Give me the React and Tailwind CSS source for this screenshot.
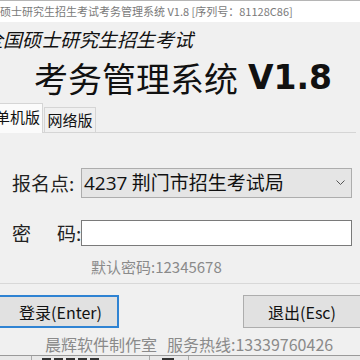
const CJK = { fontFamily: '"Noto Sans CJK SC", "Noto Sans", sans-serif' }

export default function App() {
  return (
    <div className="w-[360px] h-[360px] overflow-hidden bg-[#f0f0f0] flex flex-col" style={CJK}>
      {/* window title */}
      <div className="h-[22px] shrink-0 bg-white border-t border-[#b5b5b5] text-[11px] leading-[20px] text-[#7a7a7a] whitespace-nowrap">
        硕士研究生招生考试考务管理系统 V1.8 [序列号：81128C86]
      </div>

      {/* header */}
      <div className="mt-[4px] ml-[-16px] h-[26px] text-[19px] leading-[26px] italic text-[#111] whitespace-nowrap">
        全国硕士研究生招生考试
      </div>
      <div className="mt-[6px] pl-[34px] h-[40px] flex items-center whitespace-nowrap text-[#111]">
        <span className="text-[34px] leading-[40px]">考务管理系统</span>
        <span className="ml-[10px] text-[33px] leading-[40px] font-bold" style={{ fontFamily: '"DejaVu Sans", sans-serif' }}>V1.8</span>
      </div>

      {/* tabs */}
      <div className="mt-[5px] flex items-end h-[30px] border-b border-[#d5d5d5] mr-[4px]">
        <div className="ml-[-1px] w-[44px] h-[30px] bg-[#fbfbfb] border-t border-r border-[#d5d5d5] text-[15px] leading-[26px] text-[#111] mb-[-1px] overflow-hidden whitespace-nowrap">
          <span className="ml-[-4px]">单机版</span>
        </div>
        <div className="ml-[1px] w-[52px] h-[25px] bg-[#f0f0f0] border border-b-0 border-[#d5d5d5] text-[15px] leading-[23px] text-[#111] text-center">
          网络版
        </div>
      </div>

      {/* form */}
      <div className="flex flex-col h-[151px] border-b border-[#d8d8d8]">
        <div className="mt-[35px] flex items-center h-[30px]">
          <div className="w-[81px] pl-[12px] text-[19px] text-[#222] whitespace-nowrap">报名点:</div>
          <div className="w-[271px] h-[30px] bg-[#e5e5e5] border border-[#adadad] flex items-center pl-[2px] pr-[6px]">
            <span className="flex-1 text-[19px] text-[#111] whitespace-nowrap">
              <span style={{ fontFamily: '"Open Sans", sans-serif' }}>4237</span> 荆门市招生考试局
            </span>
            <svg width="9" height="6" viewBox="0 0 9 6" fill="none" stroke="#555" strokeWidth="1">
              <path d="M0.5 0.5 L4.5 4.5 L8.5 0.5" />
            </svg>
          </div>
        </div>
        <div className="mt-[22px] flex items-center h-[26px]">
          <div className="w-[81px] pl-[12px] text-[19px] text-[#222] whitespace-nowrap flex">
            <span>密</span>
            <span className="ml-[26px]">码:</span>
          </div>
          <div className="w-[271px] h-[26px] bg-white border border-[#7a7a7a]" />
        </div>
        <div className="mt-[12px] pl-[91px] text-[15px] leading-[18px] text-[#8a8a8a] whitespace-nowrap">
          默认密码:12345678
        </div>
      </div>

      {/* buttons */}
      <div className="mt-[11px] flex justify-between h-[33px]">
        <button className="ml-[-2px] w-[121px] h-[33px] bg-[#e1e1e1] border-2 border-[#2f83d3] text-[16px] text-[#111] pl-[4px]">
          登录(Enter)
        </button>
        <button className="w-[118px] h-[33px] bg-[#e1e1e1] border border-[#adadad] text-[16px] text-[#111] mr-[-1px]">
          退出(Esc)
        </button>
      </div>

      <div className="mt-[6px] pl-[45px] h-[20px] text-[16px] leading-[20px] text-[#8a8a8a] whitespace-nowrap">
        晨辉软件制作室<span className="ml-[10px]">服务热线:13339760426</span>
      </div>

      {/* window behind */}
      <div className="mt-[1px] flex-1 border-t border-[#9a9a9a] bg-[#e8e8e8] flex items-start">
        <div className="w-[32px] h-full border-r border-[#aaa]" />
        <div className="ml-[10px] mt-[2px] flex gap-[3px]">
          <div className="w-[9px] h-[2px] bg-[#333]" />
          <div className="w-[9px] h-[2px] bg-[#333]" />
          <div className="w-[9px] h-[2px] bg-[#333]" />
          <div className="w-[9px] h-[2px] bg-[#333]" />
          <div className="w-[9px] h-[2px] bg-[#333]" />
        </div>
        <div className="ml-[50px] h-full border-l border-[#aaa]" />
        <div className="ml-[12px] mt-[2px] w-[12px] h-[2px] bg-[#333]" />
        <div className="ml-[14px] h-full border-l border-[#aaa]" />
      </div>
    </div>
  )
}
